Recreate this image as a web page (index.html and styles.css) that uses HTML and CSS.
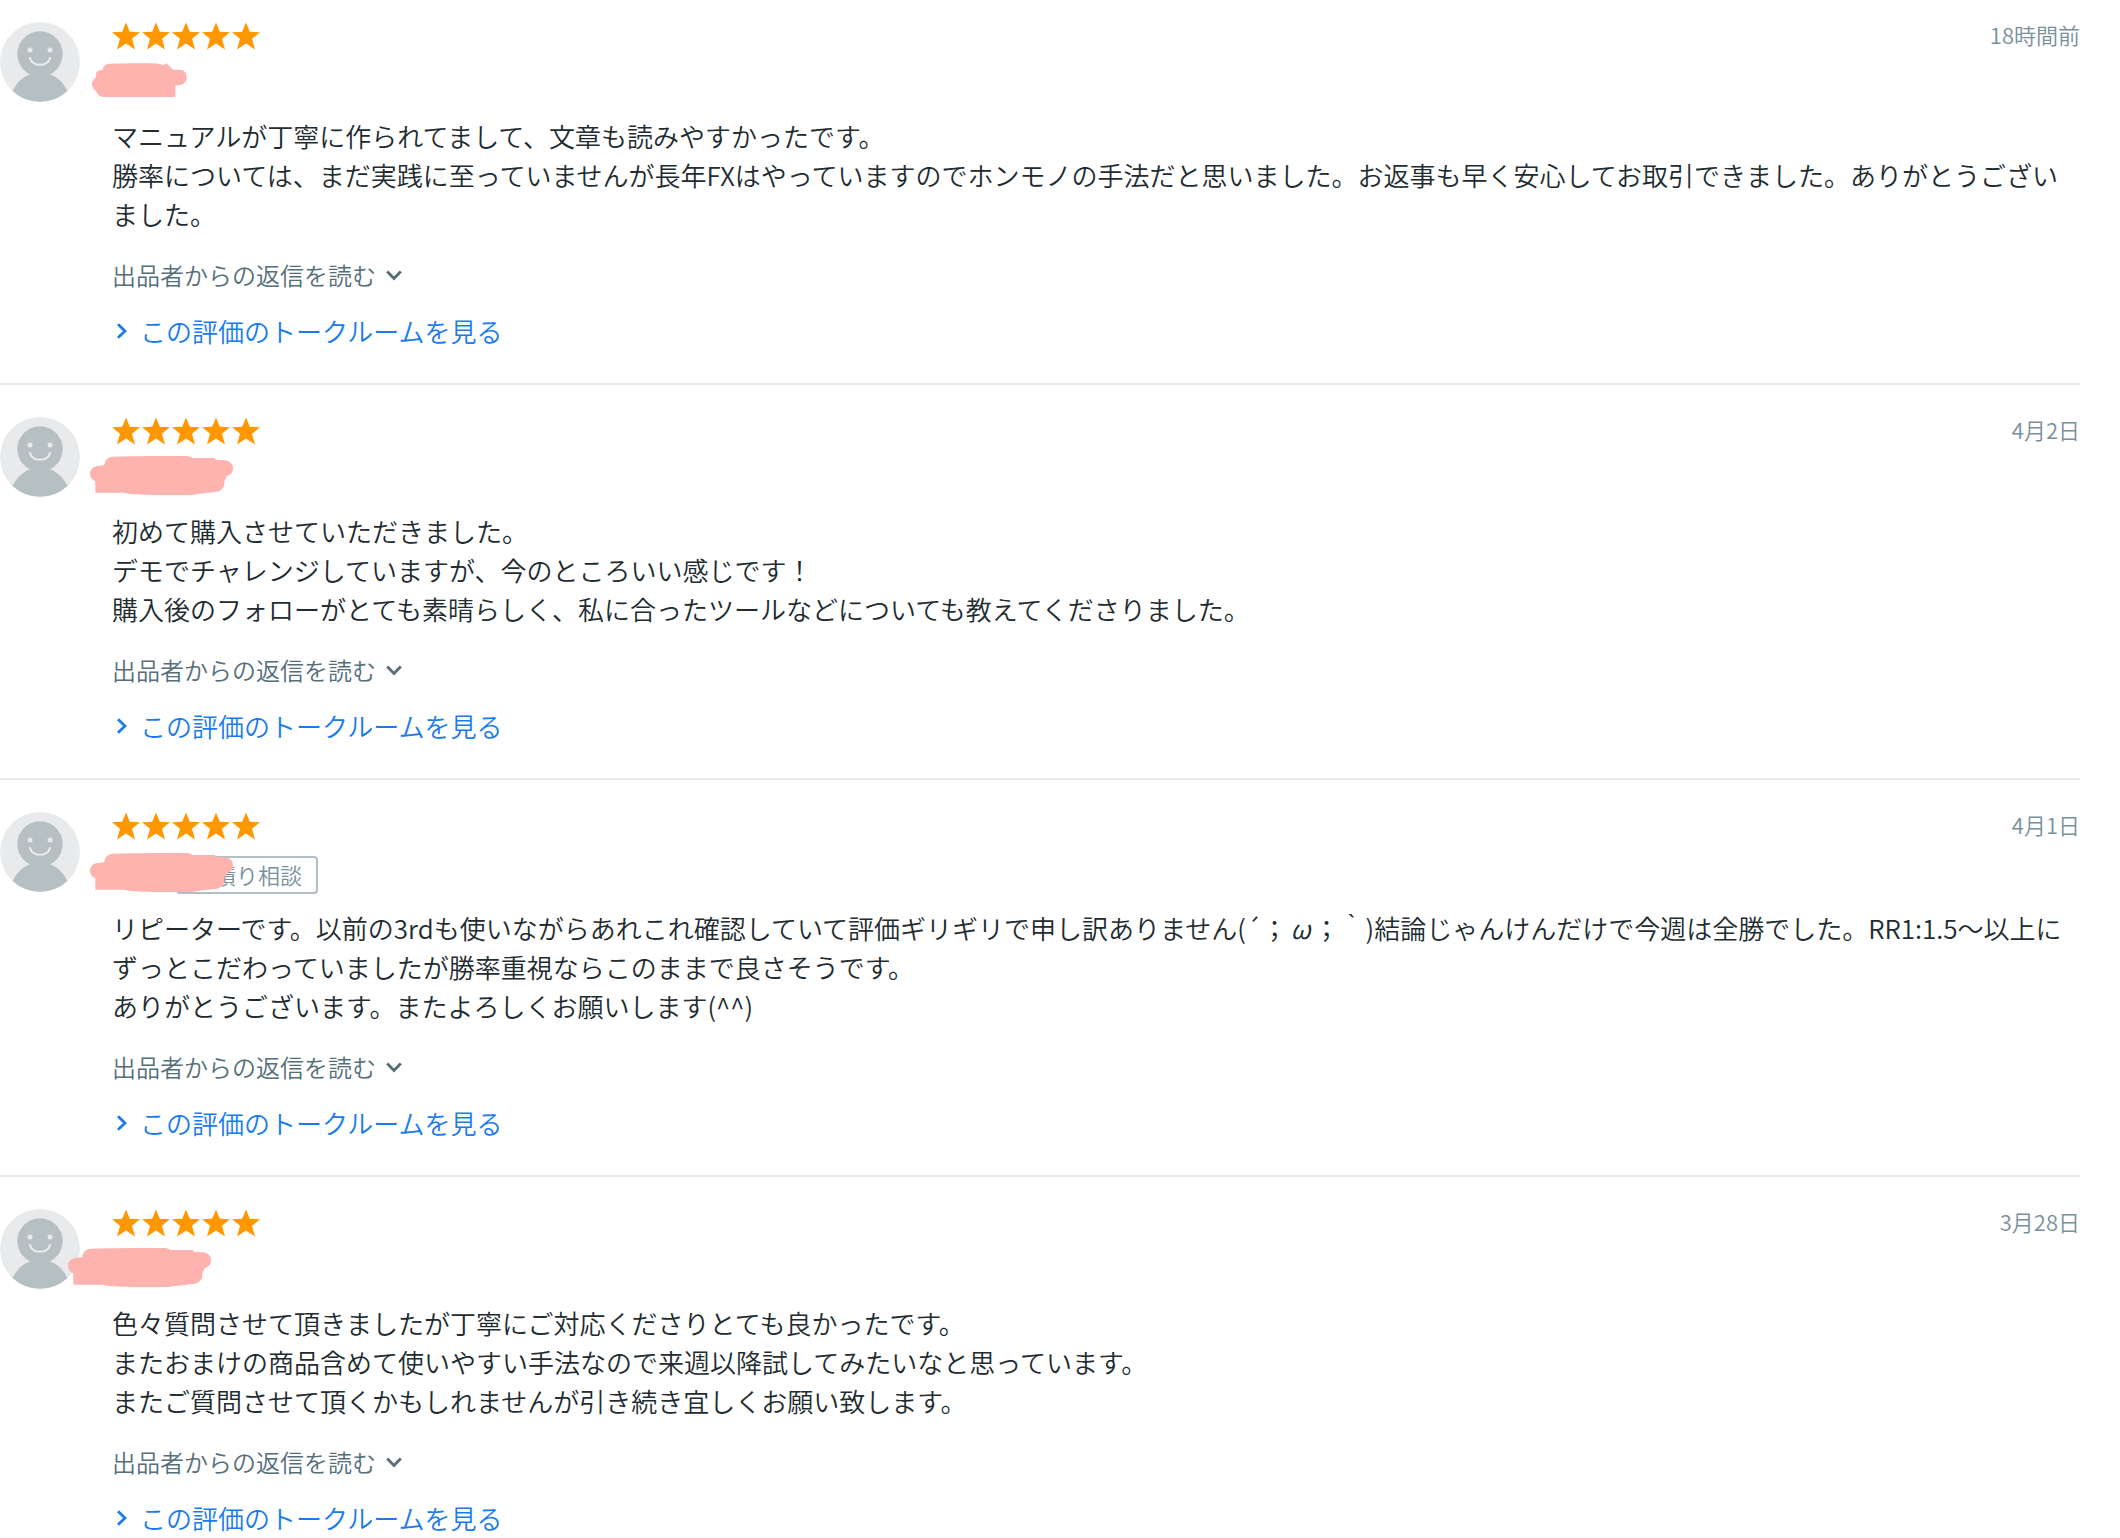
FILE: index.html
```html
<!DOCTYPE html>
<html lang="ja">
<head>
<meta charset="utf-8">
<meta name="viewport" content="width=device-width, initial-scale=1">
<title>評価・感想</title>
<link rel="stylesheet" href="styles.css">
</head>
<body>
<svg class="defs" aria-hidden="true">
  <symbol id="avatar" viewBox="0 0 80 80">
    <circle cx="40" cy="40" r="40" fill="#e8eaec"/>
    <circle cx="40" cy="32" r="22.7" fill="#b6bfc2"/>
    <path d="M12.6 69C17 60 24 53.5 32 52L48 52C56 53.5 63 60 67.4 69A40 40 0 0 1 12.6 69Z" fill="#b6bfc2"/>
    <circle cx="30" cy="28" r="2.5" fill="#e8eaec"/>
    <circle cx="50" cy="28" r="2.5" fill="#e8eaec"/>
    <path d="M30 36C32 45 48 45 50 36" fill="none" stroke="#e8eaec" stroke-width="2.2" stroke-linecap="round"/>
  </symbol>
  <symbol id="stars" viewBox="0 0 148 28">
    <g fill="#ff9800">
      <path id="star" d="M14 .5L17.8 9.800L28 10.2L20 16.8L23 27.500L14 21.500L5 27.500L8 16.8L0 10.2L10.2 9.800Z"/>
      <use href="#star" x="30"/>
      <use href="#star" x="60"/>
      <use href="#star" x="90"/>
      <use href="#star" x="120"/>
    </g>
  </symbol>
  <symbol id="mask-short" viewBox="0 0 95 34">
    <path fill="#ffb3ae" d="M4.500 9C6 7 8 7.500 10.500 7C11 3 14 1 18 .7C35 0 50 0 65 .5C68 1 70 1.500 72 2L74 0L81 6.700H88C97 7.500 97 21 88 22L83.300 22.300V34H12C8 34 5.500 32 4.500 28.500C2 27 0 24.500 0 21C0 18 2 16 3.700 14.700C4 12 4 10.500 4.500 9Z"/>
  </symbol>
  <symbol id="mask-long" viewBox="0 0 143 39">
    <path fill="#ffb3ae" d="M14.300 9C15 4 18 1 23 .8C45 0 75 0 97 0C99 .3 101 1 102.300 2H125L125.700 4L135 4.300C140 5 143 8 143 12.300C143 17 140 19.500 136.700 20.300C136 23 134.500 24 134.300 26C135 31 131 35 126.700 35.700C118 36.500 108 38 100 39C85 39.200 70 39.200 56.700 38.700C48 38.500 39 38.500 34 36.700H5.300V25.300C2 24 0 21 0 18C0 14 2.500 11.500 5.300 10.500C8 9.500 11 10 14.300 9Z"/>
  </symbol>
  <symbol id="chevron-down" viewBox="0 0 16 12">
    <path d="M1.200 2.500L8 9.500L14.800 2.500" fill="none" stroke="currentColor" stroke-width="2.800"/>
  </symbol>
  <symbol id="chevron-right" viewBox="0 0 12 16">
    <path d="M2 1.200L9 8L2 14.800" fill="none" stroke="currentColor" stroke-width="2.800"/>
  </symbol>
</svg>

<main class="reviews">
  <article class="review">
    <svg class="avatar" role="img" aria-label="ユーザー"><use href="#avatar"/></svg>
    <div class="content">
      <header class="head">
        <svg class="stars" role="img" aria-label="5つ星"><use href="#stars"/></svg>
        <time class="date">18時間前</time>
      </header>
      <div class="name">
        <svg class="mask mask-short" aria-hidden="true"><use href="#mask-short"/></svg>
      </div>
      <p class="text">マニュアルが丁寧に作られてまして、文章も読みやすかったです。<br>勝率については、まだ実践に至っていませんが長年FXはやっていますのでホンモノの手法だと思いました。お返事も早く安心してお取引できました。ありがとうございました。</p>
      <button class="reply" type="button">出品者からの返信を読む<svg class="icon-down" aria-hidden="true"><use href="#chevron-down"/></svg></button>
      <a class="talk" href="#"><svg class="icon-right" aria-hidden="true"><use href="#chevron-right"/></svg>この評価のトークルームを見る</a>
    </div>
  </article>

  <article class="review">
    <svg class="avatar" role="img" aria-label="ユーザー"><use href="#avatar"/></svg>
    <div class="content">
      <header class="head">
        <svg class="stars" role="img" aria-label="5つ星"><use href="#stars"/></svg>
        <time class="date">4月2日</time>
      </header>
      <div class="name">
        <svg class="mask mask-long" aria-hidden="true"><use href="#mask-long"/></svg>
      </div>
      <p class="text">初めて購入させていただきました。<br>デモでチャレンジしていますが、今のところいい感じです！<br>購入後のフォローがとても素晴らしく、私に合ったツールなどについても教えてくださりました。</p>
      <button class="reply" type="button">出品者からの返信を読む<svg class="icon-down" aria-hidden="true"><use href="#chevron-down"/></svg></button>
      <a class="talk" href="#"><svg class="icon-right" aria-hidden="true"><use href="#chevron-right"/></svg>この評価のトークルームを見る</a>
    </div>
  </article>

  <article class="review">
    <svg class="avatar" role="img" aria-label="ユーザー"><use href="#avatar"/></svg>
    <div class="content">
      <header class="head">
        <svg class="stars" role="img" aria-label="5つ星"><use href="#stars"/></svg>
        <time class="date">4月1日</time>
      </header>
      <div class="name">
        <span class="tag">見積り相談</span>
        <svg class="mask mask-long mask-tagged" aria-hidden="true"><use href="#mask-long"/></svg>
      </div>
      <p class="text">リピーターです。以前の3rdも使いながらあれこれ確認していて評価ギリギリで申し訳ありません(´；<i class="omega">ω</i>；｀)結論じゃんけんだけで今週は全勝でした。RR1:1.5〜以上にずっとこだわっていましたが勝率重視ならこのままで良さそうです。<br>ありがとうございます。またよろしくお願いします(^^)</p>
      <button class="reply" type="button">出品者からの返信を読む<svg class="icon-down" aria-hidden="true"><use href="#chevron-down"/></svg></button>
      <a class="talk" href="#"><svg class="icon-right" aria-hidden="true"><use href="#chevron-right"/></svg>この評価のトークルームを見る</a>
    </div>
  </article>

  <article class="review">
    <svg class="avatar" role="img" aria-label="ユーザー"><use href="#avatar"/></svg>
    <div class="content">
      <header class="head">
        <svg class="stars" role="img" aria-label="5つ星"><use href="#stars"/></svg>
        <time class="date">3月28日</time>
      </header>
      <div class="name">
        <svg class="mask mask-long mask-wide" aria-hidden="true"><use href="#mask-long"/></svg>
      </div>
      <p class="text">色々質問させて頂きましたが丁寧にご対応くださりとても良かったです。<br>またおまけの商品含めて使いやすい手法なので来週以降試してみたいなと思っています。<br>またご質問させて頂くかもしれませんが引き続き宜しくお願い致します。</p>
      <button class="reply" type="button">出品者からの返信を読む<svg class="icon-down" aria-hidden="true"><use href="#chevron-down"/></svg></button>
      <a class="talk" href="#"><svg class="icon-right" aria-hidden="true"><use href="#chevron-right"/></svg>この評価のトークルームを見る</a>
    </div>
  </article>
</main>
</body>
</html>
```
FILE: styles.css
```css
* {
  box-sizing: border-box;
}

body {
  margin: 0;
  background: #fff;
  color: #212b30;
  font-family: "Noto Sans CJK JP", sans-serif;
  font-size: 26px;
  font-weight: 350;
  line-height: 39px;
  text-spacing-trim: space-all;
}

.defs {
  position: absolute;
  width: 0;
  height: 0;
}

.reviews {
  padding-right: 40px;
}

.review {
  display: flex;
  align-items: flex-start;
  gap: 32px;
  padding: 32px 0 33px;
  border-bottom: 2px solid #e8e9ea;
}

.review:first-child {
  padding-top: 22px;
}

.review:last-child {
  padding-bottom: 0;
  border-bottom: 0;
}

.avatar {
  flex: none;
  width: 80px;
  height: 80px;
}

.content {
  flex: 1;
  min-width: 0;
  display: flex;
  flex-direction: column;
  align-items: flex-start;
}

.head {
  align-self: stretch;
  display: flex;
  align-items: flex-start;
  justify-content: space-between;
}

.stars {
  width: 148px;
  height: 28px;
}

.date {
  color: #78909c;
  font-size: 22px;
  line-height: 24px;
}

.name {
  position: relative;
  min-height: 36px;
  margin-top: 16px;
}

.tag {
  display: block;
  margin-left: 64px;
  padding: 0 14px 2px;
  border: 2px solid #b0bec5;
  border-radius: 4px;
  color: #78909c;
  font-size: 22px;
  line-height: 32px;
}

/* Brush strokes that hide the user names */
.mask {
  position: absolute;
}

.mask-short {
  top: -3px;
  left: -20px;
  width: 95px;
  height: 34px;
}

.mask-long {
  top: -5px;
  left: -22px;
  width: 143px;
  height: 39px;
}

.mask-tagged {
  top: -3px;
}

.mask-wide {
  left: -44px;
}

.text {
  margin: 14px 0 24px;
}

.omega {
  display: inline-block;
  width: 26px;
  text-align: center;
}

.reply {
  display: flex;
  align-items: center;
  gap: 10px;
  padding: 0;
  border: 0;
  background: none;
  color: #546e7a;
  font: inherit;
  font-size: 24px;
  line-height: 36px;
  cursor: pointer;
}

.icon-down {
  width: 16px;
  height: 12px;
}

.talk {
  display: flex;
  align-items: center;
  gap: 12px;
  margin-top: 18px;
  padding-left: 4px;
  color: #1a7cec;
  text-decoration: none;
}

.icon-right {
  width: 12px;
  height: 16px;
}
```
